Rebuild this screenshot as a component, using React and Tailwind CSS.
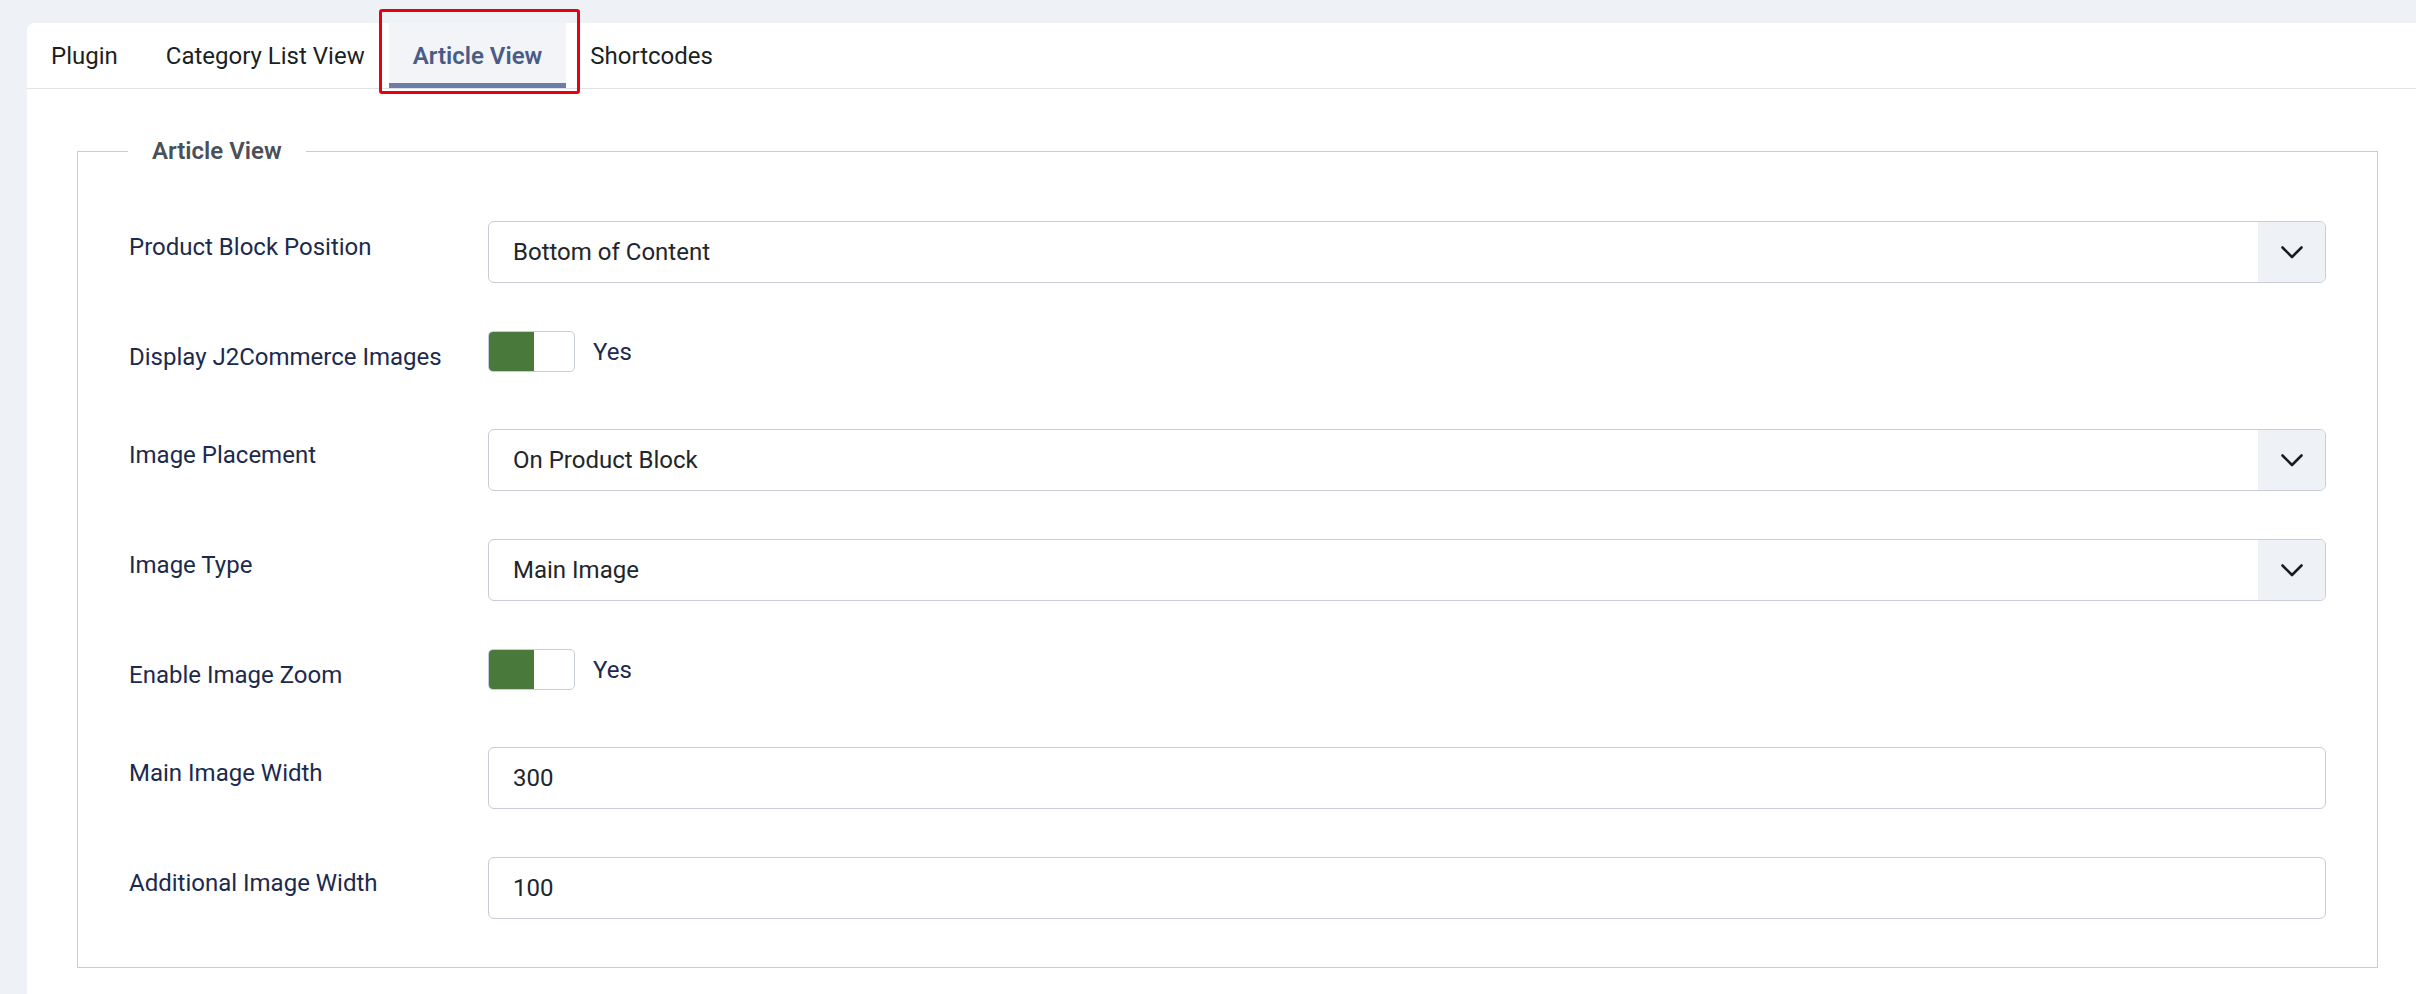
import { useState } from "react";

const tabs = ["Plugin", "Category List View", "Article View", "Shortcodes"];

const fields = [
  { label: "Product Block Position", type: "select", value: "Bottom of Content" },
  { label: "Display J2Commerce Images", type: "toggle", value: true },
  { label: "Image Placement", type: "select", value: "On Product Block" },
  { label: "Image Type", type: "select", value: "Main Image" },
  { label: "Enable Image Zoom", type: "toggle", value: true },
  { label: "Main Image Width", type: "text", value: "300" },
  { label: "Additional Image Width", type: "text", value: "100" },
];

const Chevron = () => (
  <svg width="22" height="13" viewBox="0 0 22 13" fill="none">
    <polyline points="1.5,1.5 11,11 20.5,1.5" stroke="#1b1d21" strokeWidth="2.6" strokeLinecap="round" strokeLinejoin="round" />
  </svg>
);

const SelectBox = ({ value }) => (
  <div className="flex h-[62px] w-full items-stretch rounded-md border border-[#c8ccd6] bg-white">
    <div className="flex flex-1 items-center px-6 text-[24px] text-[#22262a]">{value}</div>
    <div className="flex w-[67px] items-center justify-center rounded-r-md bg-[#eef2f7]">
      <Chevron />
    </div>
  </div>
);

const Toggle = ({ on }) => (
  <div className="flex h-[50px] items-start">
    <div className="flex h-[41px] w-[87px] overflow-hidden rounded-[5px] border border-[#c8ccd6] bg-white">
      <div className={on ? "w-[45px] bg-[#497a3c]" : "w-[45px] bg-white"} />
    </div>
    <span className="ml-[18px] mt-[3px] text-[24px] leading-[36px] text-[#1c2a4e]">{on ? "Yes" : "No"}</span>
  </div>
);

const TextBox = ({ value }) => (
  <div className="flex h-[62px] w-full items-center rounded-md border border-[#c8ccd6] bg-white px-6 text-[24px] text-[#22262a]">
    {value}
  </div>
);

export default function App() {
  const [active, setActive] = useState("Article View");

  return (
    <div className="min-h-screen overflow-hidden bg-[#eef2f6] pl-[27px] pt-[23px] font-['Roboto',sans-serif]">
      <div className="-mr-[12px] rounded-tl-lg bg-white pb-10">
        {/* Tabs */}
        <div className="flex h-[66px] border-b border-[#dfe3e8]">
          {tabs.map((t) =>
            t === active ? (
              <button
                key={t}
                onClick={() => setActive(t)}
                className="relative flex h-[65px] items-center border-b-[5px] border-[#6b7fa5] bg-[#f3f4f8] px-6 pt-[5px] text-[24px] font-semibold text-[#485c86]"
              >
                {t}
                {/* highlight frame around the current tab */}
                <span className="pointer-events-none absolute -left-[10px] -right-[14px] -top-[14px] -bottom-[11px] rounded-[3px] border-[3px] border-[#e8000f]" />
              </button>
            ) : (
              <button
                key={t}
                onClick={() => setActive(t)}
                className="flex h-[65px] items-center px-6 text-[24px] text-[#1d1f22]"
              >
                {t}
              </button>
            )
          )}
        </div>

        {/* Settings group */}
        <div className="px-[50px] pt-[44px]">
          <fieldset className="border border-[#c9ccd6] p-0">
            <legend className="ml-[50px] px-6 text-[24px] font-semibold leading-[36px] text-[#4a5058]">Article View</legend>
            <div className="px-[51px] pt-[52px]">
              {fields.map((f) => (
                <div key={f.label} className="mb-12 flex">
                  <label className="w-[359px] shrink-0 pt-2 text-[24px] leading-[36px] text-[#1c2a4e]">{f.label}</label>
                  <div className="flex-1">
                    {f.type === "select" && <SelectBox value={f.value} />}
                    {f.type === "toggle" && <Toggle on={f.value} />}
                    {f.type === "text" && <TextBox value={f.value} />}
                  </div>
                </div>
              ))}
            </div>
          </fieldset>
        </div>
      </div>
    </div>
  );
}
